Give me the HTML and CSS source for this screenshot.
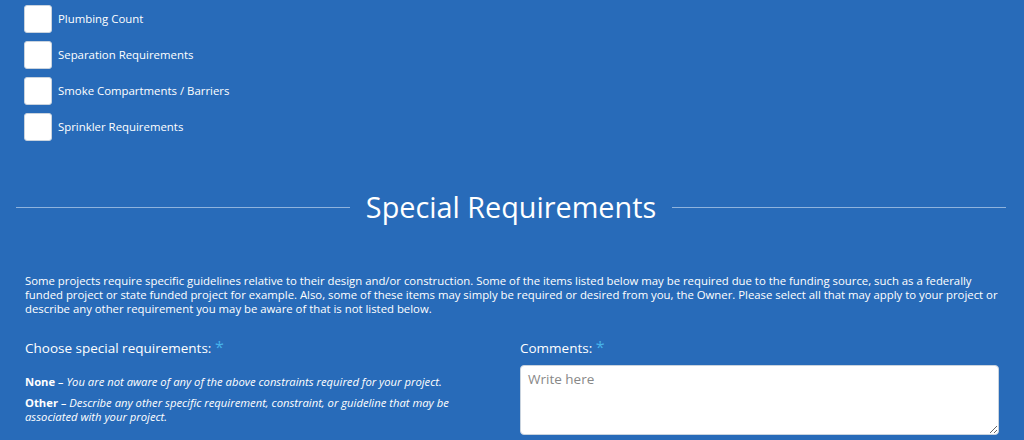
FILE: index.html
```html
<!DOCTYPE html>
<html>
<head>
<meta charset="utf-8">
<link rel="stylesheet" href="styles.css">
</head>
<body>
<div class="page">
  <ul class="checks">
    <li class="check"><span class="box"></span><span class="label">Plumbing Count</span></li>
    <li class="check"><span class="box"></span><span class="label">Separation Requirements</span></li>
    <li class="check"><span class="box"></span><span class="label">Smoke Compartments / Barriers</span></li>
    <li class="check"><span class="box"></span><span class="label">Sprinkler Requirements</span></li>
  </ul>

  <div class="section-title">
    <span class="rule"></span>
    <h2>Special Requirements</h2>
    <span class="rule"></span>
  </div>

  <p class="intro">Some projects require specific guidelines relative to their design and/or construction. Some of the items listed below may be required due to the funding source, such as a federally funded project or state funded project for example. Also, some of these items may simply be required or desired from you, the Owner. Please select all that may apply to your project or describe any other requirement you may be aware of that is not listed below.</p>

  <div class="cols">
    <div class="col">
      <div class="field-label">Choose special requirements: <span class="req">*</span></div>
      <p class="note"><b>None</b> <i>– You are not aware of any of the above constraints required for your project.</i></p>
      <p class="note"><b>Other</b> <i>– Describe any other specific requirement, constraint, or guideline that may be associated with your project.</i></p>
    </div>
    <div class="col">
      <div class="field-label">Comments: <span class="req">*</span></div>
      <textarea class="comments" placeholder="Write here"></textarea>
    </div>
  </div>
</div>
</body>
</html>
```

FILE: styles.css
```css
html, body {
  margin: 0;
  padding: 0;
  background: #286bb9;
  height: 100%;
  overflow: hidden;
}
body {
  font-family: "Open Sans", "Liberation Sans", sans-serif;
  color: #ffffff;
}
.page {
  padding: 5px 25px 0 24px;
}
.checks {
  list-style: none;
  margin: 0;
  padding: 0;
  display: flex;
  flex-direction: column;
  gap: 8px;
}
.check {
  display: flex;
  align-items: center;
  gap: 6px;
  height: 28px;
}
.box {
  width: 26px;
  height: 26px;
  background: #ffffff;
  border: 1px solid #c9d3de;
  border-radius: 3px;
  flex: none;
}
.label {
  font-size: 11.4px;
  line-height: 16px;
}
.section-title {
  display: flex;
  align-items: center;
  gap: 16px;
  margin: 46px -7px 0 -8px;
}
.rule {
  flex: 1;
  height: 1px;
  background: #8fb3dd;
}
.section-title h2 {
  margin: 0;
  font-weight: 400;
  font-size: 28.8px;
  line-height: 40px;
}
.intro {
  margin: 47px 0 0 1px;
  font-size: 11.35px;
  line-height: 14px;
}
.cols {
  display: grid;
  grid-template-columns: 1fr 1fr;
  column-gap: 16px;
  margin: 21px 0 0 1px;
}
.field-label {
  font-size: 13.5px;
  line-height: 20px;
}
.req {
  color: #46b3ea;
  font-size: 16px;
}
.note {
  margin: 17px 0 0;
  font-size: 11.25px;
  line-height: 14px;
  width: 440px;
}
.note + .note {
  margin-top: 7px;
}
.comments {
  display: block;
  box-sizing: border-box;
  width: 100%;
  height: 70px;
  margin-top: 7px;
  border: 1px solid #c9d3de;
  border-radius: 4px;
  background: #ffffff;
  padding: 4px 7px;
  font-family: "Open Sans", "Liberation Sans", sans-serif;
  font-size: 13.5px;
  color: #333;
  resize: vertical;
}
.comments::placeholder {
  color: #888;
}
```
